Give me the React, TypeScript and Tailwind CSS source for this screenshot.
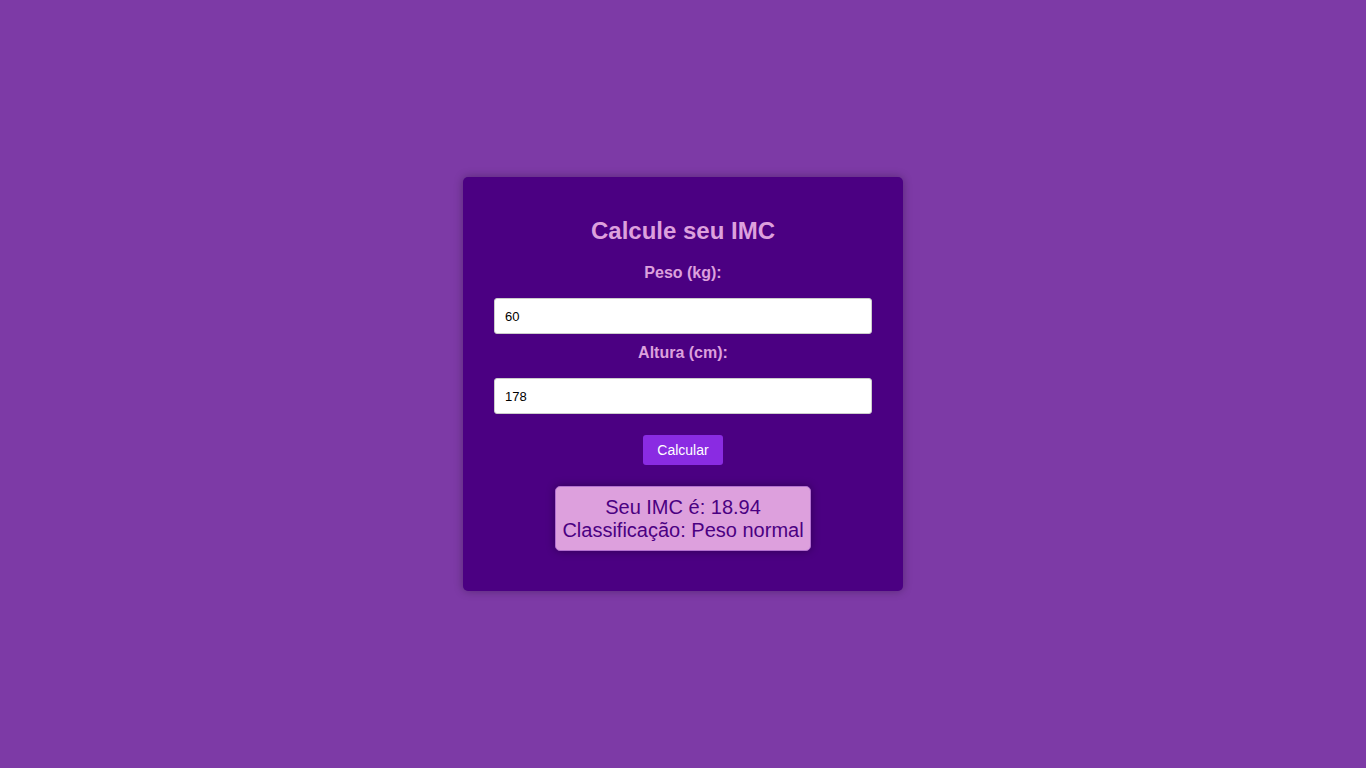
import { useState } from 'react';

export default function App() {
    const [peso, setPeso] = useState('60');
    const [altura, setAltura] = useState('178');

    return (
        <div
            className="flex min-h-screen items-center justify-center bg-[#7d3aa6]"
            style={{ fontFamily: '"Liberation Sans", Arial, sans-serif' }}
        >
            {/* Card */}
            <div className="flex w-[440px] flex-col items-center rounded-[5px] bg-[#4b0082] px-[31px] pt-[40px] pb-[40px] shadow-[0_0_10px_rgba(0,0,0,0.3)]">
                <h2 className="h-[28px] text-[24px] font-bold leading-[28px] text-[#dda0dd]">Calcule seu IMC</h2>

                <label className="mt-[19px] h-[18px] text-[16px] font-bold leading-[18px] text-[#dda0dd]">Peso (kg):</label>
                <input
                    type="number"
                    value={peso}
                    onChange={(e) => setPeso(e.target.value)}
                    className="mt-[16px] h-[36px] w-[378px] rounded-[3px] border border-[#ccc] bg-white px-[10px] text-[13px] text-black outline-none"
                />

                <label className="mt-[10px] h-[18px] text-[16px] font-bold leading-[18px] text-[#dda0dd]">Altura (cm):</label>
                <input
                    type="number"
                    value={altura}
                    onChange={(e) => setAltura(e.target.value)}
                    className="mt-[16px] h-[36px] w-[378px] rounded-[3px] border border-[#ccc] bg-white px-[10px] text-[13px] text-black outline-none"
                />

                <button className="mt-[21px] h-[30px] w-[80px] rounded-[3px] bg-[#8a2be2] text-[14px] text-white">
                    Calcular
                </button>

                {/* Resultado */}
                <div className="mt-[21px] rounded-[5px] border border-[#b46fd0] bg-[#dda0dd] px-[6px] py-[9px] text-center text-[20px] leading-[22.5px] text-[#4b0082] shadow-[0_0_8px_rgba(0,0,0,0.35)]">
                    <div>Seu IMC é: 18.94</div>
                    <div>Classificação: Peso normal</div>
                </div>
            </div>
        </div>
    );
}
